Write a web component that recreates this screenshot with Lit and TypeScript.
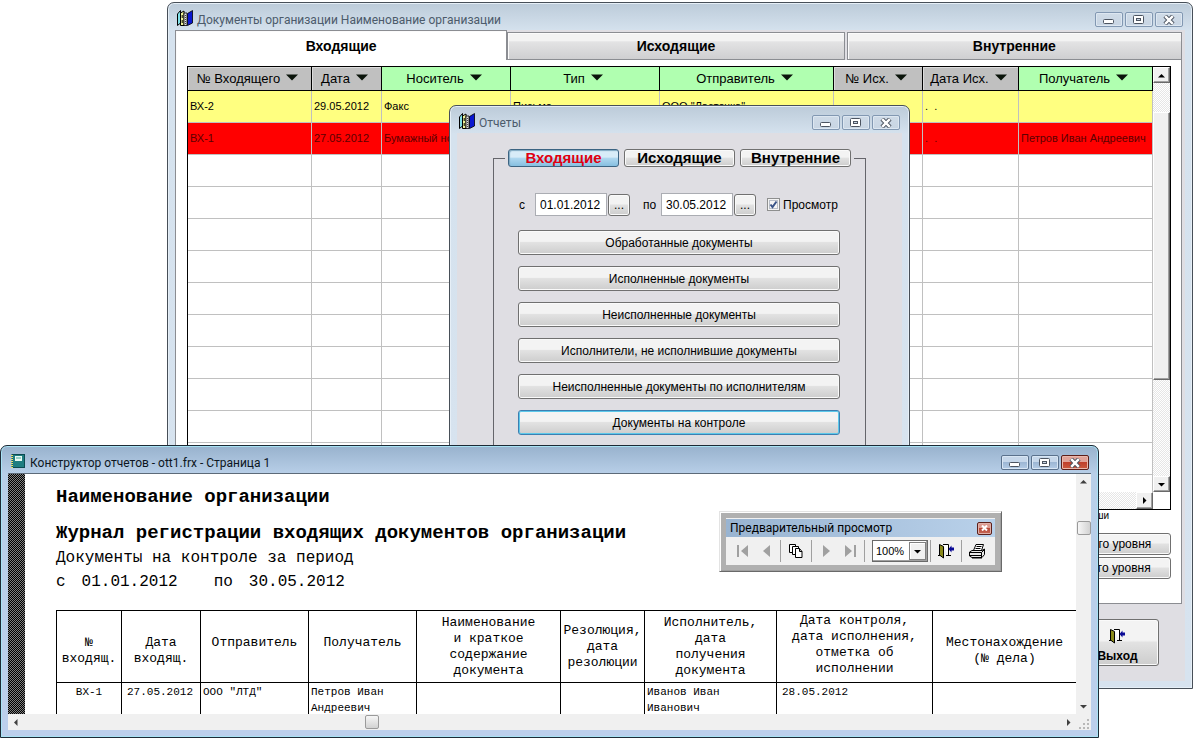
import { LitElement, html, svg, css, nothing } from "lit";
import { customElement, property } from "lit/decorators.js";
import { classMap } from "lit/directives/class-map.js";

const booksIcon = html`<svg width="16" height="16" viewBox="0 0 16 16" aria-hidden="true">
  <path d="M0.5 4L3.5 0.5V13L0.5 15.5Z" fill="#7fe0e8" stroke="#000" />
  <path d="M3.5 3L7 1V15.5H3.5Z" fill="#f0f49a" stroke="#000" />
  <path d="M5.2 5V8M5.2 10V13" stroke="#000" fill="none" />
  <path d="M7 3H10V15.5H7Z" fill="#e4e4e4" stroke="#000" stroke-width="0.8" />
  <path d="M8.5 5V14" stroke="#444" stroke-dasharray="1 1" />
  <path d="M10.5 3.5L15.5 0.5V13L10.5 15.5Z" fill="#0a18d0" stroke="#000" stroke-width="0.8" />
</svg>`;

const reportIcon = html`<svg width="14" height="14" viewBox="0 0 14 14" aria-hidden="true">
  <rect x="1" y="0.5" width="12.5" height="13" fill="#1f7d80" stroke="#0c4a50" />
  <rect x="4" y="2" width="7" height="5" fill="#e8fbf4" />
  <path d="M5 4H10" stroke="#4aa89a" />
  <path d="M1 1V14" stroke="#e8e070" stroke-width="2" stroke-dasharray="1 1" />
</svg>`;

const doorIcon = html`<svg width="17" height="16" viewBox="0 0 17 16" aria-hidden="true">
  <path d="M5 1.5H10.5V12.5" fill="#fff" stroke="#000" />
  <path d="M0 12.5H3M8 12.5H13" fill="none" stroke="#000" />
  <path d="M1.5 1.5L5.5 3.5V15L1.5 12Z" fill="#8a8a1a" stroke="#000" />
  <path d="M10.5 6L13.5 2.5V4.5H16V7.5H13.5V9.5Z" fill="#0a0a96" />
</svg>`;

const printerIcon = html`<svg width="17" height="15" viewBox="0 0 17 15" aria-hidden="true">
  <path d="M4.5 6.5L7 0.5H14.5L12.5 6.5" fill="#fff" stroke="#000" />
  <path d="M7.5 2.5H12.5M6.5 4.5H11.5" stroke="#000" fill="none" />
  <path d="M0.5 8L3 6.5H13L15.5 5V10.5L13 13.5H3L0.5 12Z" fill="#e8e8e8" stroke="#000" />
  <path d="M0.5 8.5H12.5V13.5M1 11.5H12.5M12.5 8.5L15.5 5.5" stroke="#000" fill="none" />
  <path d="M3 14H13" stroke="#000" />
</svg>`;

const pagesIcon = html`<svg width="14" height="14" viewBox="0 0 14 14" aria-hidden="true">
  <path d="M0.5 0.5H6.5V8.5H0.5Z" fill="#fff" stroke="#000" />
  <path d="M3.5 2.5H9.5V10.5H3.5Z" fill="#fff" stroke="#000" />
  <path d="M6.5 4.5H10.5L13 7.5V13.5H6.5Z" fill="#fff" stroke="#000" />
  <path d="M10.5 4.5V7.5H13" fill="none" stroke="#000" />
</svg>`;

const sortMark = html`<svg class="sort" width="12" height="7" viewBox="0 0 12 7" aria-hidden="true">
  <path d="M0 0.5H12L6 6.5Z" fill="#0a140a" />
</svg>`;

const arrowShapes: Record<string, string> = {
  up: "M0 5.5H7L3.5 2Z",
  down: "M0 2H7L3.5 5.5Z",
  left: "M5.5 0V7L2 3.5Z",
  right: "M2 0V7L5.5 3.5Z",
};

const arrow = (dir: string) =>
  html`<svg width="7" height="7" viewBox="0 0 7 7" aria-hidden="true"><path d=${arrowShapes[dir]} fill="currentColor" /></svg>`;

@customElement("desk-window")
export class DeskWindow extends LitElement {
  @property() heading = "";
  @property({ type: Boolean, reflect: true }) active = false;

  static styles = css`
    :host {
      box-sizing: border-box;
      display: flex;
      flex-direction: column;
      border: 1px solid #474f58;
      border-radius: 7px 7px 0 0;
      background: linear-gradient(#bccbd9, #d5e2ee 28px, #d7e3ef);
      box-shadow: inset 0 0 0 1px #e6eff7;
      overflow: hidden;
    }
    :host([active]) {
      border-color: #1d2a36;
      background: linear-gradient(#98b2cd, #b8cfe8 28px, #bccfec);
      box-shadow: inset 0 0 0 1px #a8e2f4;
    }
    .bar {
      display: flex;
      align-items: center;
      height: 27px;
      box-sizing: border-box;
      padding: 6px 9px 0;
      font: 12px/16px Roboto, "Open Sans", sans-serif;
      color: #4c5b6b;
    }
    :host([active]) .bar {
      padding-left: 10px;
      color: #0c1622;
    }
    .caption {
      flex: 1;
      margin-left: 4px;
      white-space: nowrap;
    }
    :host([active]) .caption {
      margin-left: 5px;
    }
    .controls {
      display: flex;
      gap: 2px;
    }
    .control {
      display: grid;
      place-items: center;
      width: 28px;
      height: 15px;
      padding: 0;
      border: 1px solid #8298b2;
      border-radius: 2px;
      background: linear-gradient(#cfdbe7, #c8d5e3);
      box-shadow: inset 0 0 0 1px #dde7f1;
    }
    :host([active]) .control {
      border-color: #5a718c;
      background: linear-gradient(#c6d7ea 45%, #9db7d4 50%, #b4cce6);
      box-shadow: inset 0 0 0 1px #d8e6f4;
    }
    :host([active]) .close {
      border-color: #5c1f1a;
      background: linear-gradient(#e0a298 45%, #c0402c 50%, #cc5a40);
      box-shadow: inset 0 0 0 1px #eab8ac;
    }
    .client {
      flex: 1;
      margin: 0 7px 7px;
      background: #dfdee3;
    }
    :host([active]) .client {
      border-top: 1px solid #5c6a78;
      background: #fff;
    }
  `;

  render() {
    return html`
      <header class="bar">
        <slot name="icon"></slot>
        <span class="caption">${this.heading}</span>
        <div class="controls">
          <button class="control" aria-label="Свернуть">
            <svg width="12" height="10" viewBox="0 0 12 10"><rect x="0.5" y="4.5" width="10" height="4" rx="1" fill="#fff" stroke="#4c5460" /></svg>
          </button>
          <button class="control" aria-label="Развернуть">
            <svg width="12" height="10" viewBox="0 0 12 10">
              <rect x="0.5" y="0.5" width="10" height="8" rx="1" fill="#fff" stroke="#4c5460" />
              <rect x="3.5" y="3.5" width="4" height="2" fill="#c8d5e3" stroke="#4c5460" />
            </svg>
          </button>
          <button class="control close" aria-label="Закрыть">
            <svg width="12" height="10" viewBox="0 0 12 10">
              <path d="M2 1L10 9M10 1L2 9" stroke="#4c5460" stroke-width="4.4" fill="none" />
              <path d="M2.2 1.2L9.8 8.8M9.8 1.2L2.2 8.8" stroke="#fff" stroke-width="2.4" fill="none" />
            </svg>
          </button>
        </div>
      </header>
      <div class="client"><slot></slot></div>
    `;
  }
}

interface Column {
  title: string;
  width?: number;
  green?: boolean;
}

const columns: Column[] = [
  { title: "№ Входящего", width: 124 },
  { title: "Дата", width: 70 },
  { title: "Носитель", width: 129, green: true },
  { title: "Тип", width: 149, green: true },
  { title: "Отправитель", width: 174, green: true },
  { title: "№ Исх.", width: 89 },
  { title: "Дата Исх.", width: 96 },
  { title: "Получатель", green: true },
];

const records = [
  { tone: "pending", cells: ["ВХ-2", "29.05.2012", "Факс", "Письмо", 'ООО "Ласточка"', "", ".  .", ""] },
  { tone: "overdue", cells: ["ВХ-1", "27.05.2012", "Бумажный носитель", "", "", "", ".  .", "Петров Иван Андреевич"] },
];
const emptyRows = 10;

const reportKinds = ["Входящие", "Исходящие", "Внутренние"];

const reports = [
  "Обработанные документы",
  "Исполненные документы",
  "Неисполненные документы",
  "Исполнители, не исполнившие документы",
  "Неисполненные документы по исполнителям",
  "Документы на контроле",
];

const journalColumns = [
  { lines: ["№", "входящ."], width: 65, at: "low" },
  { lines: ["Дата", "входящ."], width: 79, at: "low" },
  { lines: ["Отправитель"], width: 108, at: "low" },
  { lines: ["Получатель"], width: 108, at: "low" },
  { lines: ["Наименование", "и краткое", "содержание", "документа"], width: 144, at: "high" },
  { lines: ["Резолюция,", "дата", "резолюции"], width: 84, at: "mid" },
  { lines: ["Исполнитель,", "дата", "получения", "документа"], width: 132, at: "high" },
  { lines: ["Дата контроля,", "дата исполнения,", "отметка об", "исполнении"], width: 156, at: "top" },
  { lines: ["Местонахождение", "(№ дела)"], width: 144, at: "low" },
];

const journalRow = ["ВХ-1", "27.05.2012", 'ООО "ЛТД"', "Петров Иван Андреевич", "", "", "Иванов Иван Иванович", "28.05.2012", ""];

@customElement("app-root")
export class AppRoot extends LitElement {
  static styles = css`
    :host {
      display: block;
      position: relative;
      height: 100vh;
      overflow: hidden;
      background: #fff;
      font: 12px/16px "Liberation Sans", Arial, sans-serif;
      color: #000;
    }
    button,
    input,
    select {
      font: inherit;
      color: inherit;
      box-sizing: border-box;
    }
    table {
      border-collapse: separate;
      border-spacing: 0;
      table-layout: fixed;
    }
    th,
    td {
      box-sizing: border-box;
    }
    .documents {
      position: absolute;
      left: 167px;
      right: 3px;
      top: 2px;
    }
    .reports {
      position: absolute;
      left: 449px;
      top: 105px;
      width: 461px;
    }
    .preview {
      position: absolute;
      left: 0;
      right: 97px;
      top: 445px;
    }

    /* document register */
    .tabs {
      display: grid;
      grid-template-columns: 332fr 337fr 337fr;
      height: 30px;
      margin-right: 3px;
      align-items: end;
    }
    .tab {
      height: 28px;
      padding: 0;
      border: 1px solid #8b8d92;
      background: linear-gradient(#f3f3f3 30%, #e3e3e4 34%, #cfcfd1);
      box-shadow: inset 1px 1px 0 #fbfbfb;
      font-size: 14px;
      font-weight: bold;
    }
    .tab.current {
      height: 30px;
      border-bottom: 0;
      background: #fff;
    }
    .tab + .tab + .tab {
      margin-left: 2px;
    }
    .page {
      margin-right: 3px;
      padding: 6px 10px 24px 11px;
      border: 1px solid #8b8d92;
      border-top: 0;
      background: #fff;
    }
    .grid {
      display: grid;
      grid-template-columns: 1fr 17px;
      border: 1px solid #000;
    }
    .rows {
      height: 425px;
      overflow: hidden;
    }
    .register {
      width: 100%;
    }
    .register th {
      height: 24px;
      padding: 0;
      border-right: 1px solid #000;
      border-bottom: 1px solid #000;
      background: #c0c0c0;
      box-shadow: inset 1px 1px 0 #dcdcdc;
      font-size: 13px;
      font-weight: normal;
      white-space: nowrap;
    }
    .register th.green {
      background: #b0ffb0;
      box-shadow: none;
    }
    .sort {
      margin: 0 4px 2px 6px;
    }
    .register td {
      height: 32px;
      padding: 0 0 2px 2px;
      border-right: 1px solid #c0c0c0;
      border-bottom: 1px solid #c0c0c0;
      font-size: 11px;
      white-space: pre;
      overflow: hidden;
    }
    .pending td {
      background: #ffff80;
    }
    .overdue td {
      background: #ff0000;
      color: #5c0000;
    }
    .vbar,
    .hbar {
      display: flex;
      background: repeating-conic-gradient(#e6e6e6 0 25%, #fff 0 50%) 0 0 / 2px 2px;
    }
    .vbar {
      flex-direction: column;
    }
    .step,
    .thumb {
      display: grid;
      place-items: center;
      padding: 0;
      border: 1px solid;
      border-color: #fff #696969 #696969 #fff;
      background: #f0f0f0;
      box-shadow: inset -1px -1px 0 #a0a0a0;
    }
    .step {
      width: 17px;
      height: 16px;
    }
    .hbar .step {
      height: 17px;
    }
    .hbar {
      justify-content: space-between;
    }
    .vbar .thumb {
      height: 266px;
      margin: 29px 0 auto;
    }
    .hint {
      margin: 0 62px 11px 0;
      font-size: 10px;
      line-height: 12px;
      text-align: right;
    }
    .actions {
      display: flex;
      flex-direction: column;
      align-items: flex-end;
      gap: 2px;
    }
    .push {
      border: 1px solid #707070;
      border-radius: 3px;
      background: linear-gradient(#f3f3f3 45%, #e2e2e2 50%, #cdcdcd);
      box-shadow: inset 0 0 0 1px #fafafa;
      padding: 0;
    }
    .actions .push {
      width: 125px;
      height: 22px;
    }
    .exit {
      display: flex;
      flex-direction: column;
      align-items: center;
      gap: 4px;
      width: 83px;
      height: 47px;
      margin: 15px 26px 15px auto;
      padding-top: 8px;
      font-weight: bold;
    }

    /* report selection */
    .choices {
      width: 373px;
      box-sizing: border-box;
      margin: 16px 0 0 36px;
      padding: 0;
      border: 1px solid #65656b;
    }
    .kinds {
      display: flex;
      gap: 5px;
      margin-left: 11px;
      padding: 0 3px;
    }
    .kind {
      width: 111px;
      height: 18px;
      font-size: 15px;
      line-height: 16px;
      font-weight: bold;
    }
    .kind.chosen {
      border-color: #3c6482;
      background: linear-gradient(#d8ecf8 45%, #b0d8f0 50%, #86bfe0);
      box-shadow: inset 1px 1px 1px #7fa8c0;
      color: #e00010;
    }
    .form {
      padding: 26px 25px 30px 24px;
    }
    .period {
      display: flex;
      align-items: center;
      margin-bottom: 14px;
    }
    .from {
      width: 17px;
      padding-left: 1px;
      box-sizing: border-box;
    }
    .till {
      width: 18px;
      margin-left: 13px;
    }
    .date {
      width: 72px;
      height: 23px;
      padding: 0 0 0 4px;
      border: 1px solid #abadb3;
      background: #fff;
    }
    .pick {
      width: 22px;
      height: 22px;
      margin-left: 1px;
    }
    .view {
      display: flex;
      align-items: center;
      gap: 3px;
      margin-left: 11px;
    }
    .check {
      appearance: none;
      width: 13px;
      height: 13px;
      margin: 0;
      border: 1px solid #8e8f8f;
      background: #f4f4f4;
      box-shadow: inset 0 0 0 1px #f4f4f4, inset 0 0 0 2px #b8bec8;
    }
    .tick {
      display: grid;
    }
    .tick > * {
      grid-area: 1 / 1;
    }
    .list {
      display: flex;
      flex-direction: column;
      gap: 11px;
    }
    .list .push {
      height: 25px;
    }
    .list .push.focused {
      border-color: #3c7fb1;
      box-shadow: inset 0 0 0 1px #5cc8ea;
    }

    /* print preview */
    .sheet {
      display: grid;
      grid-template-columns: 17px 1fr 15px;
      grid-template-rows: 240px 16px;
    }
    .desk {
      background: repeating-conic-gradient(#000 0 25%, #808080 0 50%) 0 0 / 2px 2px;
    }
    .paper {
      position: relative;
      overflow: hidden;
      padding: 11px 0 0 31px;
      font: 16px/24px "Liberation Mono", "Courier New", monospace;
    }
    .paper h1,
    .paper h2 {
      margin: 0;
      font-size: 19px;
      line-height: 24px;
      white-space: nowrap;
    }
    .paper h1 {
      margin-bottom: 12px;
    }
    .paper h2 {
      margin-bottom: 1px;
    }
    .paper p {
      margin: 0;
      white-space: pre;
    }
    .span {
      display: flex;
      gap: 16px;
    }
    .span .second {
      margin-left: 20px;
    }
    .journal {
      width: 1021px;
      margin-top: 16px;
      border-top: 1px solid #000;
      border-left: 1px solid #000;
      line-height: 16px;
    }
    .journal th,
    .journal td {
      padding: 0;
      border-right: 1px solid #000;
      vertical-align: top;
      white-space: pre-line;
    }
    .journal th {
      height: 72px;
      border-bottom: 1px solid #000;
      font-size: 13px;
      font-weight: normal;
    }
    .journal .top {
      padding-top: 2px;
    }
    .journal .high {
      padding-top: 4px;
    }
    .journal .mid {
      padding-top: 12px;
    }
    .journal .low {
      padding-top: 24px;
    }
    .journal td {
      height: 60px;
      padding: 1px 24px 0 2px;
      font-size: 11px;
    }
    .journal td.whole {
      padding: 1px 0 0 5px;
    }
    .journal td.number {
      padding: 1px 0 0;
      text-align: center;
    }
    .scroll {
      display: flex;
      align-items: center;
      background: #f0f0f0;
      color: #404040;
    }
    .scroll .nudge {
      display: grid;
      place-items: center;
      width: 15px;
      height: 15px;
      padding: 0;
      border: 0;
      background: none;
    }
    .scroll.vertical {
      flex-direction: column;
    }
    .scroll.flat {
      grid-column: 1 / 3;
    }
    .grip {
      border: 1px solid #9a9a9a;
      border-radius: 2px;
      background: linear-gradient(90deg, #f6f6f6, #d2d2d2);
      box-sizing: border-box;
      width: 14px;
      height: 14px;
    }
    .vertical .grip {
      margin: 32px 0 auto;
    }
    .flat .grip {
      margin: 0 auto 0 342px;
      background: linear-gradient(#f6f6f6, #d2d2d2);
    }
    .corner {
      display: grid;
      place-items: end;
      background: #f0f0f0;
    }

    /* floating preview toolbar */
    .toolbar {
      position: absolute;
      left: 694px;
      top: 37px;
      width: 283px;
      box-sizing: border-box;
      padding: 6px;
      border: 1px solid;
      border-color: #e3e3e3 #696969 #696969 #e3e3e3;
      background: #b0b0b0;
      box-shadow: inset 1px 1px 0 #fff, inset -1px -1px 0 #a0a0a0;
      font: 12px/16px Roboto, "Open Sans", sans-serif;
    }
    .toolhead {
      display: flex;
      align-items: center;
      justify-content: space-between;
      height: 18px;
      padding: 0 3px 0 4px;
      background: linear-gradient(90deg, #99b4d1, #b9d1ea);
      border-top: 1px solid #f0f0f0;
    }
    .shut {
      display: grid;
      place-items: center;
      width: 15px;
      height: 13px;
      padding: 0;
      border: 1px solid #5c1f1a;
      border-radius: 2px;
      background: linear-gradient(#dc9a90 45%, #b84838 50%, #c86a58);
      box-shadow: inset 0 0 0 1px #e0b0a8;
    }
    .tools {
      display: flex;
      align-items: center;
      height: 28px;
      padding-left: 4px;
      background: #f0f0f0;
      color: #a0a0a0;
    }
    .tool {
      display: grid;
      place-items: center;
      width: 24px;
      height: 24px;
      padding: 0;
      border: 0;
      background: none;
    }
    .tool.wide {
      width: 26px;
    }
    .rule {
      width: 1px;
      height: 22px;
      margin: 0 2px;
      background: #a0a0a0;
    }
    .zoom {
      display: grid;
      align-items: center;
      width: 56px;
      height: 22px;
      margin-left: 5px;
      color: #000;
    }
    .zoom > * {
      grid-area: 1 / 1;
    }
    .zoom select {
      appearance: none;
      width: 56px;
      height: 22px;
      padding: 0 0 0 3px;
      border: 1px solid #696969;
      border-radius: 0;
      background: #fff;
      box-shadow: inset -1px -1px 0 #a0a0a0;
      font: 11px "Liberation Sans", Arial, sans-serif;
    }
    .drop {
      justify-self: end;
      display: grid;
      place-items: center;
      width: 17px;
      height: 18px;
      margin-right: 2px;
      box-sizing: border-box;
      border: 1px solid #808080;
      background: #f0f0f0;
      box-shadow: inset 1px 1px 0 #fff;
      pointer-events: none;
    }
  `;

  private renderRegister() {
    return html`
      <table class="register">
        <colgroup>
          ${columns.map((c) => html`<col width=${c.width ?? nothing} />`)}
        </colgroup>
        <thead>
          <tr>
            ${columns.map((c) => html`<th class=${classMap({ green: !!c.green })}>${c.title}${sortMark}</th>`)}
          </tr>
        </thead>
        <tbody>
          ${records.map((r) => html`<tr class=${r.tone}>${r.cells.map((t) => html`<td>${t}</td>`)}</tr>`)}
          ${Array.from({ length: emptyRows + 1 }, () => html`<tr>${columns.map(() => html`<td></td>`)}</tr>`)}
        </tbody>
      </table>
    `;
  }

  private renderDocuments() {
    return html`
      <desk-window class="documents" heading="Документы организации Наименование организации">
        <span slot="icon">${booksIcon}</span>
        <nav class="tabs">
          ${reportKinds.map((k, i) => html`<button class=${classMap({ tab: true, current: i === 0 })}>${k}</button>`)}
        </nav>
        <section class="page">
          <div class="grid">
            <div class="rows">${this.renderRegister()}</div>
            <div class="vbar">
              <button class="step" aria-label="Вверх">${arrow("up")}</button>
              <div class="thumb"></div>
              <button class="step" aria-label="Вниз">${arrow("down")}</button>
            </div>
            <div class="hbar">
              <button class="step" aria-label="Влево">${arrow("left")}</button>
              <button class="step" aria-label="Вправо">${arrow("right")}</button>
            </div>
          </div>
          <p class="hint">Горячие клавиши</p>
          <div class="actions">
            <button class="push">первого уровня</button>
            <button class="push">второго уровня</button>
          </div>
        </section>
        <button class="push exit">${doorIcon}<span>Выход</span></button>
      </desk-window>
    `;
  }

  private renderReports() {
    return html`
      <desk-window class="reports" heading="Отчеты">
        <span slot="icon">${booksIcon}</span>
        <fieldset class="choices">
          <legend class="kinds">
            ${reportKinds.map((k, i) => html`<button class=${classMap({ push: true, kind: true, chosen: i === 0 })}>${k}</button>`)}
          </legend>
          <div class="form">
            <div class="period">
              <label class="from" for="from">с</label>
              <input class="date" id="from" type="text" value="01.01.2012" />
              <button class="push pick" aria-label="Выбрать дату начала">...</button>
              <label class="till" for="till">по</label>
              <input class="date" id="till" type="text" value="30.05.2012" />
              <button class="push pick" aria-label="Выбрать дату окончания">...</button>
              <label class="view">
                <span class="tick">
                  <input class="check" type="checkbox" checked />
                  <svg width="13" height="13" viewBox="0 0 13 13" aria-hidden="true">
                    <path d="M3.5 6.5L5.5 9L9.5 3.5" fill="none" stroke="#3a5488" stroke-width="2" />
                  </svg>
                </span>
                Просмотр
              </label>
            </div>
            <div class="list">
              ${reports.map(
                (r, i) => html`<button class=${classMap({ push: true, focused: i === reports.length - 1 })}>${r}</button>`
              )}
            </div>
          </div>
        </fieldset>
      </desk-window>
    `;
  }

  private renderToolbar() {
    const step = (label: string, width: number, shape: string) => html`
      <button class="tool" aria-label=${label}>
        <svg width=${width} height="12" viewBox="0 0 ${width} 12">${svg`<path d=${shape} fill="currentColor" />`}</svg>
      </button>
    `;
    return html`
      <div class="toolbar">
        <div class="toolhead">
          <span>Предварительный просмотр</span>
          <button class="shut" aria-label="Закрыть панель">
            <svg width="7" height="6" viewBox="0 0 7 6"><path d="M1 0.5L6 5.5M6 0.5L1 5.5" stroke="#fff" stroke-width="2" /></svg>
          </button>
        </div>
        <div class="tools">
          ${step("Первая страница", 11, "M0 0H2V12H0ZM11 0V12L4 6Z")}
          ${step("Предыдущая страница", 7, "M7 0V12L0 6Z")}
          <span class="rule"></span>
          <button class="tool wide" aria-label="Перейти к странице">${pagesIcon}</button>
          <span class="rule"></span>
          ${step("Следующая страница", 7, "M0 0V12L7 6Z")}
          ${step("Последняя страница", 11, "M0 0V12L7 6ZM9 0H11V12H9Z")}
          <span class="rule"></span>
          <label class="zoom">
            <select aria-label="Масштаб">
              <option>100%</option>
              <option>75%</option>
            </select>
            <span class="drop">${arrow("down")}</span>
          </label>
          <span class="rule"></span>
          <button class="tool wide" aria-label="Закрыть просмотр">${doorIcon}</button>
          <span class="rule"></span>
          <button class="tool wide" aria-label="Печать">${printerIcon}</button>
        </div>
      </div>
    `;
  }

  private renderPreview() {
    return html`
      <desk-window class="preview" active heading="Конструктор отчетов - ott1.frx - Страница 1">
        <span slot="icon">${reportIcon}</span>
        <div class="sheet">
          <div class="desk"></div>
          <article class="paper">
            <h1>Наименование организации</h1>
            <h2>Журнал регистрации входящих документов организации</h2>
            <p>Документы на контроле за период</p>
            <p class="span"><span>с</span><span>01.01.2012</span><span class="second">по</span><span>30.05.2012</span></p>
            <table class="journal">
              <colgroup>
                ${journalColumns.map((c) => html`<col width=${c.width} />`)}
              </colgroup>
              <thead>
                <tr>
                  ${journalColumns.map((c) => html`<th class=${c.at}>${c.lines.join("\n")}</th>`)}
                </tr>
              </thead>
              <tbody>
                <tr>
                  ${journalRow.map((t, i) => html`<td class=${classMap({ number: i === 0, whole: i === 1 || i === 7 })}>${t}</td>`)}
                </tr>
              </tbody>
            </table>
            ${this.renderToolbar()}
          </article>
          <div class="scroll vertical">
            <button class="nudge" aria-label="Вверх">${arrow("up")}</button>
            <div class="grip"></div>
            <button class="nudge" aria-label="Вниз">${arrow("down")}</button>
          </div>
          <div class="scroll flat">
            <button class="nudge" aria-label="Влево">${arrow("left")}</button>
            <div class="grip"></div>
            <button class="nudge" aria-label="Вправо">${arrow("right")}</button>
          </div>
          <div class="corner">
            <svg width="12" height="12" viewBox="0 0 12 12" aria-hidden="true">
              <path d="M8 1h2v2h-2zM8 5h2v2h-2zM4 5h2v2h-2zM8 9h2v2h-2zM4 9h2v2h-2zM0 9h2v2h-2z" fill="#b8b8b8" />
            </svg>
          </div>
        </div>
      </desk-window>
    `;
  }

  render() {
    return html`${this.renderDocuments()}${this.renderReports()}${this.renderPreview()}`;
  }
}
